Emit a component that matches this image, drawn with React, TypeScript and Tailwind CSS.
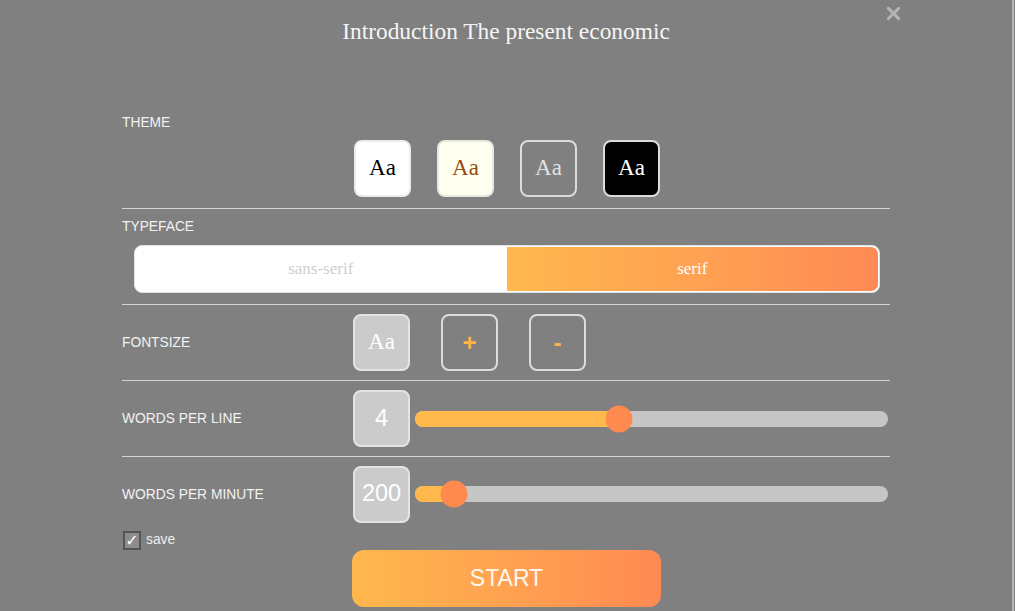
import React from 'react'

const sans = { fontFamily: '"Liberation Sans", Arial, sans-serif' }
const serif = { fontFamily: '"Liberation Serif", "Times New Roman", serif' }

const Label = ({ children }: { children: React.ReactNode }) => (
  <div className="text-[13.8px] leading-[15px] text-[#f2f2f2]" style={sans}>
    {children}
  </div>
)

const Rule = () => <div className="h-px w-full bg-[#d4d4d4]" />

const Slider = ({ pct }: { pct: number }) => (
  <div className="relative ml-[5px] h-[16px] w-[473px] rounded-full bg-[#c6c6c6]">
    <div className="h-full rounded-full bg-[#ffb84c]" style={{ width: `${pct}%` }} />
    <div
      className="absolute top-1/2 h-[27px] w-[27px] -translate-x-1/2 -translate-y-1/2 rounded-full bg-[#ff8a50]"
      style={{ left: `${pct}%` }}
    />
  </div>
)

const ValueBox = ({ value }: { value: string }) => (
  <div
    className="flex h-[57px] w-[57px] items-center justify-center rounded-[8px] border-2 border-[#e4e4e4] bg-[#cbcbcb] text-[23.5px] text-white"
    style={sans}
  >
    {value}
  </div>
)

const themes = [
  { bg: 'bg-white', text: 'text-black', border: 'border-[#ececec]' },
  { bg: 'bg-[#fffff0]', text: 'text-[#9a4a12]', border: 'border-[#e8e8e0]' },
  { bg: 'bg-transparent', text: 'text-[#e2e2e2]', border: 'border-[#dcdcdc]' },
  { bg: 'bg-black', text: 'text-white', border: 'border-[#dcdcdc]' },
]

export default function App() {
  return (
    <div className="h-[611px] w-[1015px] overflow-hidden bg-[#808080]">
      <div className="relative h-[611px] w-[1014px] border-r-2 border-[#b5b5b5]">
        <button className="absolute left-[886px] top-[6px] h-[15px] w-[15px]">
          <svg viewBox="0 0 16 16" className="h-[15px] w-[15px]">
            <path d="M2.5 2.5 L13.5 13.5 M13.5 2.5 L2.5 13.5" stroke="#b4b4b4" strokeWidth="3.2" strokeLinecap="round" />
          </svg>
        </button>

        <h1 className="h-[105px] pt-[16px] text-center text-[23.4px] leading-[30px] text-[#f5f5f5]" style={serif}>
          Introduction The present economic
        </h1>

        <div className="ml-[122px] w-[768px]">
          {/* theme */}
          <div className="pt-[10px]">
            <Label>THEME</Label>
            <div className="mb-[11px] mt-[10px] flex gap-[26px] pl-[232px]">
              {themes.map((t, i) => (
                <div
                  key={i}
                  className={`flex h-[57px] w-[57px] items-center justify-center rounded-[8px] border-2 ${t.bg} ${t.text} ${t.border} text-[23px]`}
                  style={serif}
                >
                  Aa
                </div>
              ))}
            </div>
          </div>
          <Rule />

          {/* typeface */}
          <div className="pt-[10px]">
            <Label>TYPEFACE</Label>
            <div className="mb-[11px] ml-[12px] mt-[11px] flex h-[48px] w-[746px] overflow-hidden rounded-[8px] border border-[#e2e2e2] bg-white text-[17px]" style={serif}>
              <div className="flex flex-1 items-center justify-center text-[#cfcfcf]">sans-serif</div>
              <div className="m-[1px] ml-0 flex flex-1 items-center justify-center rounded-r-[7px] bg-gradient-to-r from-[#ffb84d] to-[#ff8a55] text-white">
                serif
              </div>
            </div>
          </div>
          <Rule />

          {/* font size */}
          <div className="flex h-[75px] items-center">
            <div className="w-[231px]">
              <Label>FONTSIZE</Label>
            </div>
            <div className="flex gap-[31px]">
              <div
                className="flex h-[57px] w-[57px] items-center justify-center rounded-[8px] border-2 border-[#e4e4e4] bg-[#cbcbcb] text-[23px] text-white"
                style={serif}
              >
                Aa
              </div>
              <div
                className="flex h-[57px] w-[57px] items-center justify-center rounded-[8px] border-2 border-[#dcdcdc] text-[24px] font-bold text-[#ffb347]"
                style={sans}
              >
                +
              </div>
              <div
                className="flex h-[57px] w-[57px] items-center justify-center rounded-[8px] border-2 border-[#dcdcdc] text-[24px] font-bold text-[#ffb347]"
                style={sans}
              >
                -
              </div>
            </div>
          </div>
          <Rule />

          {/* words per line */}
          <div className="flex h-[75px] items-center">
            <div className="w-[231px]">
              <Label>WORDS PER LINE</Label>
            </div>
            <ValueBox value="4" />
            <Slider pct={43.1} />
          </div>
          <Rule />

          {/* words per minute */}
          <div className="flex h-[74px] items-center">
            <div className="w-[231px]">
              <Label>WORDS PER MINUTE</Label>
            </div>
            <ValueBox value="200" />
            <Slider pct={8.2} />
          </div>

          <div className="flex h-[19px] items-center gap-[5px] pl-[1px]">
            <div className="flex h-[19px] w-[18px] items-center justify-center border-2 border-[#555555] bg-[#8c8c8c] text-[16px] leading-none text-white" style={{ fontFamily: '"DejaVu Sans", sans-serif' }}>
              ✓
            </div>
            <span className="text-[13.8px] text-[#eeeeee]" style={sans}>
              save
            </span>
          </div>

          <button
            className="ml-[230px] flex h-[57px] w-[309px] items-center justify-center rounded-[12px] bg-gradient-to-r from-[#ffb84d] to-[#ff8a52] text-[23px] text-[#fff8f0]"
            style={sans}
          >
            START
          </button>
        </div>
      </div>
    </div>
  )
}
